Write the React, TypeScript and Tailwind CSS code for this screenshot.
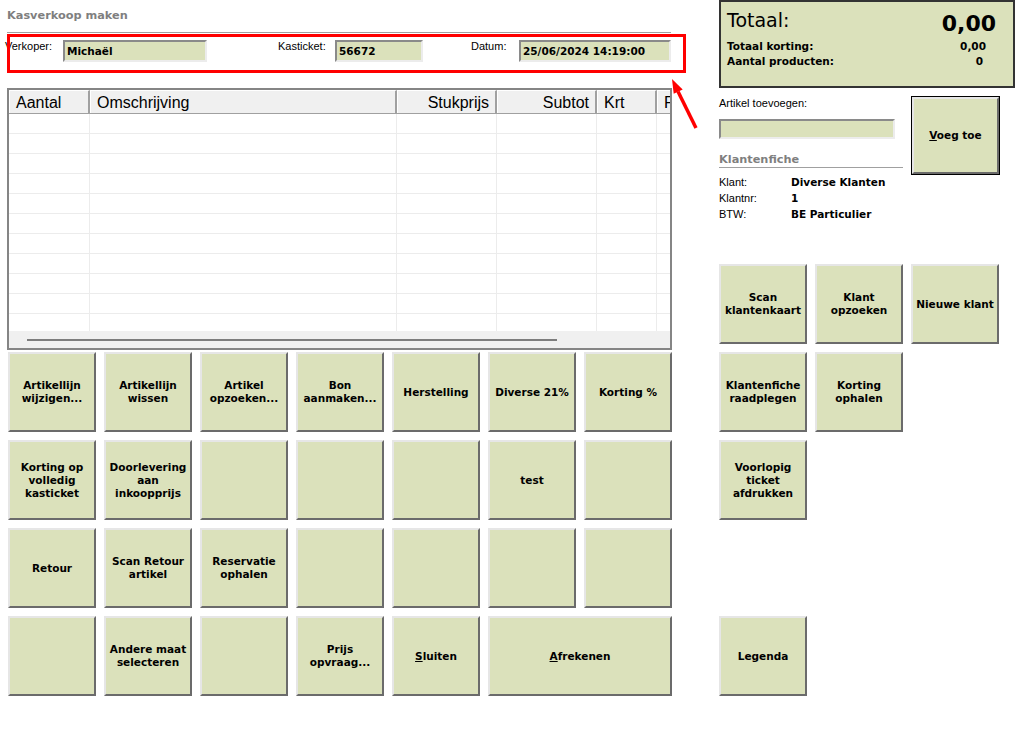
import React from "react";

const BOLD = "font-['DejaVu_Sans',sans-serif] font-bold text-[10.5px] leading-[13px]";
const HEAD = "font-['DejaVu_Sans',sans-serif] font-bold text-[11.3px] leading-[13px]";
const REG = "font-['Liberation_Sans',Arial,sans-serif] text-[11px] leading-[13px]";

function Btn({ label, className = "" }: { label?: React.ReactNode; className?: string }) {
  return (
    <div
      className={
        "flex items-center justify-center text-center whitespace-pre-line bg-[#dbe1bb] text-black border-2 border-t-[#e6e6e6] border-l-[#e6e6e6] border-r-[#6b6b6b] border-b-[#6b6b6b] " +
        BOLD +
        " " +
        className
      }
    >
      {label}
    </div>
  );
}

function Blank() {
  return <div />;
}

function Field({ value, w }: { value: string; w: string }) {
  return (
    <div
      className={
        "h-[22px] flex items-center pl-[2px] bg-[#dbe1bb] border-2 border-t-[#8a8a8a] border-l-[#8a8a8a] border-r-[#ececec] border-b-[#ececec] text-black " +
        BOLD +
        " " +
        w
      }
    >
      {value}
    </div>
  );
}

const cols = [
  { name: "Aantal", w: "w-[81px]", align: "text-left" },
  { name: "Omschrijving", w: "w-[307px]", align: "text-left" },
  { name: "Stukprijs", w: "w-[100px]", align: "text-right" },
  { name: "Subtot", w: "w-[100px]", align: "text-right" },
  { name: "Krt", w: "w-[60px]", align: "text-left" },
  { name: "F", w: "w-[20px]", align: "text-left" },
];

export default function App() {
  const rows = Array.from({ length: 11 });
  return (
    <div className="relative w-[1030px] h-[731px] bg-white overflow-hidden flex">
      {/* Left column */}
      <div className="w-[719px] flex-none flex flex-col">
        <div className={"pt-[9px] pl-[7px] text-[#7f7f7f] " + HEAD}>Kasverkoop maken</div>
        <div className="mt-[10px] ml-[7px] w-[664px] h-px bg-[#a0a0a0]" />
        <div className="mt-[7px] flex items-start">
          <div className={"ml-[5px] w-[58px] text-black " + REG}>Verkoper:</div>
          <Field value="Michaël" w="w-[144px]" />
          <div className={"ml-[71px] w-[57px] text-black " + REG}>Kasticket:</div>
          <Field value="56672" w="w-[88px]" />
          <div className={"ml-[48px] w-[48px] text-black " + REG}>Datum:</div>
          <Field value="25/06/2024 14:19:00" w="w-[152px]" />
        </div>

        {/* Grid */}
        <div className="mt-[26px] ml-[7px] w-[665px] h-[262px] border-2 border-[#858585] bg-white flex flex-col overflow-hidden">
          <div className="flex h-[24px] flex-none bg-[#f0f0f0] border-b border-[#a0a0a0] overflow-hidden">
            {cols.map((c) => (
              <div
                key={c.name}
                className={
                  "flex-none h-full px-[6px] pt-[1px] border-r-2 border-r-[#a0a0a0] border-t border-t-white border-l border-l-white font-['Liberation_Sans',Arial,sans-serif] text-[16px] leading-[22px] text-black " +
                  c.w +
                  " " +
                  c.align
                }
              >
                {c.name}
              </div>
            ))}
          </div>
          <div className="h-[217px] flex-none overflow-hidden flex flex-col">
            {rows.map((_, i) => (
              <div key={i} className="flex h-[20px] flex-none border-b border-[#ececec]">
                {cols.map((c) => (
                  <div key={c.name} className={"flex-none h-full border-r border-[#ececec] " + c.w} />
                ))}
              </div>
            ))}
          </div>
          <div className="flex-1 bg-[#f0f0f0] flex items-center">
            <div className="ml-[18px] w-[530px] h-[2px] bg-[#7d7d7d]" />
          </div>
        </div>

        {/* Buttons */}
        <div className="mt-[2px] ml-[8px] grid grid-cols-[repeat(7,88px)] auto-rows-[80px] gap-[8px]">
          <Btn label={"Artikellijn\nwijzigen..."} />
          <Btn label={"Artikellijn\nwissen"} />
          <Btn label={"Artikel\nopzoeken..."} />
          <Btn label={"Bon\naanmaken..."} />
          <Btn label="Herstelling" />
          <Btn label="Diverse 21%" />
          <Btn label="Korting %" />

          <Btn label={"Korting op\nvolledig\nkasticket"} />
          <Btn label={"Doorlevering\naan\ninkoopprijs"} />
          <Btn />
          <Btn />
          <Btn />
          <Btn label="test" />
          <Btn />

          <Btn label="Retour" />
          <Btn label={"Scan Retour\nartikel"} />
          <Btn label={"Reservatie\nophalen"} />
          <Btn />
          <Btn />
          <Btn />
          <Btn />

          <Btn />
          <Btn label={"Andere maat\nselecteren"} />
          <Btn />
          <Btn label={"Prijs\nopvraag..."} />
          <Btn
            label={
              <span>
                <span className="underline">S</span>luiten
              </span>
            }
          />
          <Btn
            className="col-span-2"
            label={
              <span>
                <span className="underline">A</span>frekenen
              </span>
            }
          />
        </div>
      </div>

      {/* Right column */}
      <div className="w-[296px] flex-none flex flex-col">
        <div className="h-[88px] border-2 border-[#333333] bg-[#dbe1bb] pl-[6px] pr-[17px] flex flex-col text-black">
          <div className="flex justify-between items-start h-[37px]">
            <span className="mt-[6px] font-['DejaVu_Sans',sans-serif] text-[19px] leading-[24px]">Totaal:</span>
            <span className="mt-[9px] font-['DejaVu_Sans',sans-serif] font-bold text-[22px] leading-[26px]">0,00</span>
          </div>
          <div className={"flex justify-between h-[15px] " + BOLD}>
            <span className="leading-[15px]">Totaal korting:</span>
            <span className="mr-[10px] leading-[15px]">0,00</span>
          </div>
          <div className={"flex justify-between h-[15px] " + BOLD}>
            <span className="leading-[15px]">Aantal producten:</span>
            <span className="mr-[13px] leading-[15px]">0</span>
          </div>
        </div>

        <div className="mt-[8px] h-[168px] flex items-start">
          <div className="w-[184px] flex-none flex flex-col">
            <div className={"mt-[1px] text-black " + REG}>Artikel toevoegen:</div>
            <div className="mt-[9px] w-[176px] h-[20px] bg-[#dbe1bb] border-2 border-t-[#8a8a8a] border-l-[#8a8a8a] border-r-[#ececec] border-b-[#ececec]" />
            <div className={"mt-[14px] text-[#7f7f7f] " + HEAD}>Klantenfiche</div>
            <div className="mt-px w-[184px] h-px bg-[#a0a0a0]" />
            <div className="mt-[6px] flex flex-col">
              {[
                ["Klant:", "Diverse Klanten"],
                ["Klantnr:", "1"],
                ["BTW:", "BE Particulier"],
              ].map(([k, v]) => (
                <div key={k} className="flex h-[16px] items-center">
                  <span className={"w-[72px] text-black " + REG}>{k}</span>
                  <span className={"text-black " + BOLD}>{v}</span>
                </div>
              ))}
            </div>
          </div>
          <div className="ml-[8px] w-[89px] h-[79px] border border-black flex">
            <Btn
              className="flex-1"
              label={
                <span>
                  <span className="underline">V</span>oeg toe
                </span>
              }
            />
          </div>
        </div>

        <div className="grid grid-cols-[repeat(3,88px)] auto-rows-[80px] gap-[8px]">
          <Btn label={"Scan\nklantenkaart"} />
          <Btn label={"Klant\nopzoeken"} />
          <Btn label="Nieuwe klant" />
          <Btn label={"Klantenfiche\nraadplegen"} />
          <Btn label={"Korting\nophalen"} />
          <Blank />
          <Btn label={"Voorlopig\nticket\nafdrukken"} />
          <Blank />
          <Blank />
          <Blank />
          <Blank />
          <Blank />
          <Btn label="Legenda" />
        </div>
      </div>

      {/* Annotation: red box and arrow */}
      <div className="absolute left-[7px] top-[34px] w-[679px] h-[39px] border-[3px] border-[#ff0000] pointer-events-none" />
      <svg className="absolute left-[660px] top-[70px] pointer-events-none" width="50" height="70" viewBox="0 0 50 70">
        <line x1="36" y1="58" x2="18" y2="21.5" stroke="#ff0000" strokeWidth="3.5" />
        <polygon points="12,9 22.7,19.4 13.7,23.8" fill="#ff0000" />
      </svg>
    </div>
  );
}
